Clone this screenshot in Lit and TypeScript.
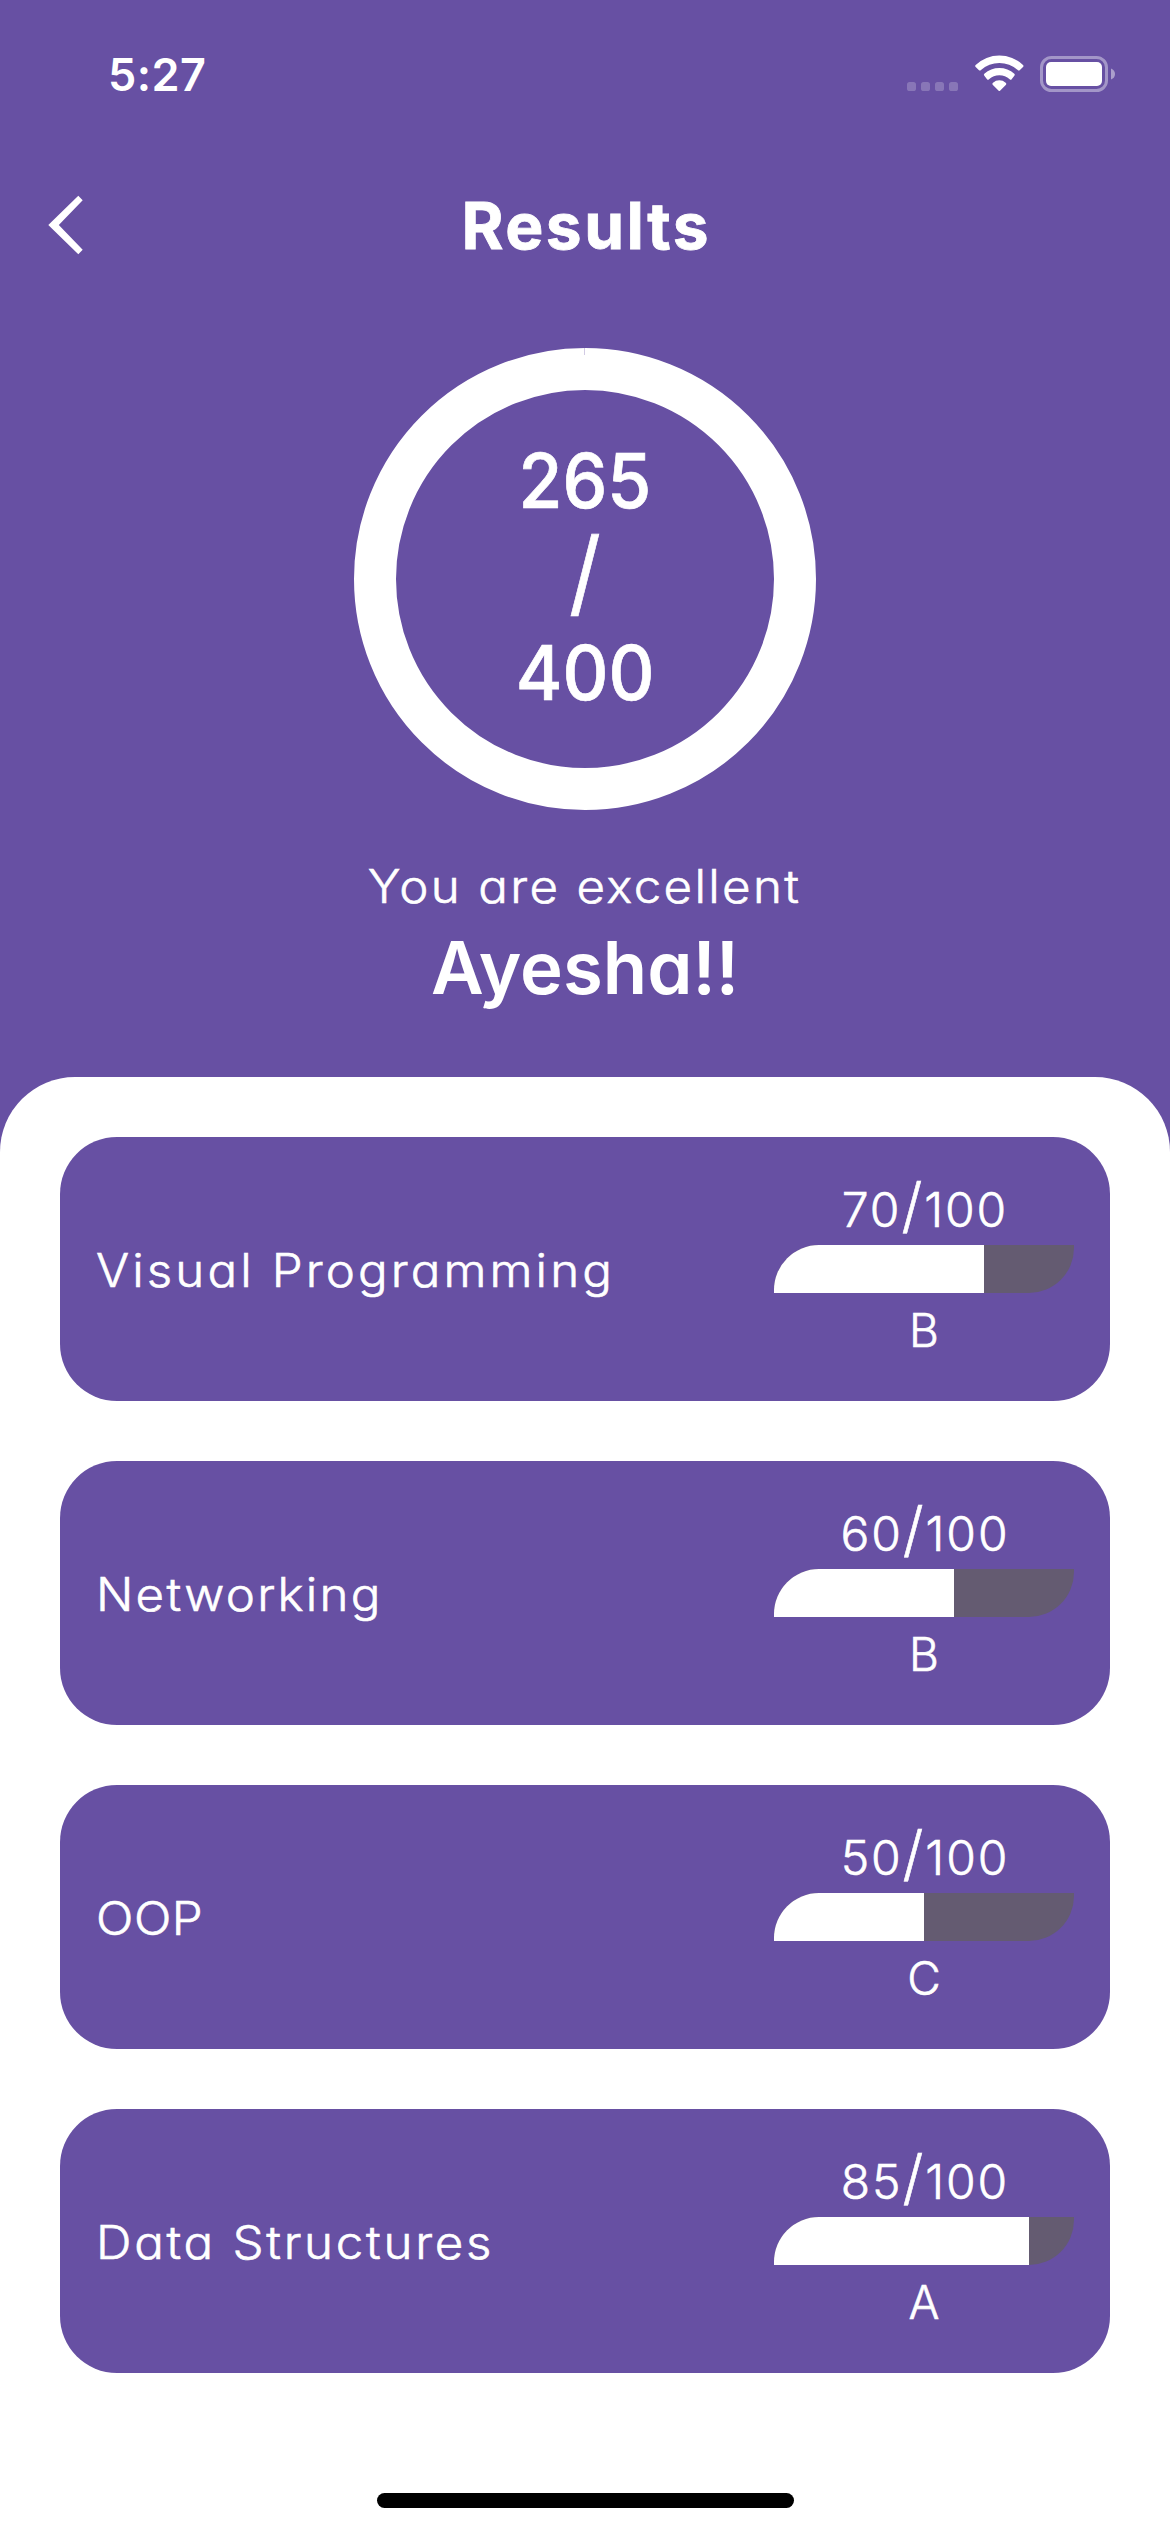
import { LitElement, html, css, svg } from "lit";
import { customElement, property } from "lit/decorators.js";

interface Subject {
  name: string;
  score: number;
  total: number;
  grade: string;
  tracking: number;
}

const SUBJECTS: Subject[] = [
  { name: "Visual Programming", score: 70, total: 100, grade: "B", tracking: 2.9 },
  { name: "Networking", score: 60, total: 100, grade: "B", tracking: 2.1 },
  { name: "OOP", score: 50, total: 100, grade: "C", tracking: 0.5 },
  { name: "Data Structures", score: 85, total: 100, grade: "A", tracking: 2.55 },
];

@customElement("status-bar")
export class StatusBar extends LitElement {
  static styles = css`
    :host {
      display: flex;
      justify-content: space-between;
      height: 141px;
      padding: 0 55px 0 108px;
      box-sizing: border-box;
      color: #fff;
    }
    .time {
      height: 150px;
      line-height: 150px;
      font-size: 45px;
      font-weight: 600;
      letter-spacing: 0.4px;
    }
    .icons {
      display: flex;
      align-items: flex-end;
      height: 92px;
    }
    svg {
      display: block;
    }
    .dots {
      margin: 0 16.5px 1px 0;
    }
    .wifi {
      margin: 0 16.5px 1px 0;
    }
  `;

  render() {
    return html`
      <div class="time">5:27</div>
      <div class="icons">
        <svg class="dots" width="51" height="9" viewBox="0 0 51 9" fill="#fff" fill-opacity=".22">
          ${[0, 14, 28, 42].map((x) => svg`<rect x=${x} width="9" height="9" rx="2.6"></rect>`)}
        </svg>
        <svg class="wifi" width="49" height="36" viewBox="0 0 147 108" fill="#fff">
          <path d="M2 30 A103 103 0 0 1 144 30 Q147 33 144 36 L134 46 Q131 48 128 45 A82 82 0 0 0 18 45 Q15 48 12 46 L2 36 Q-1 33 2 30Z" />
          <path d="M28 56 A67 67 0 0 1 118 56 Q121 59 118 62 L110 73 Q107 76 104 73 A46 46 0 0 0 42 73 Q39 76 36 73 L28 62 Q25 59 28 56Z" />
          <path d="M54 83 A29 29 0 0 1 92 83 Q95 86 93 89 L75 107 Q73 109 71 107 L53 89 Q51 86 54 83Z" />
        </svg>
        <svg width="75" height="36" viewBox="0 0 75 36">
          <rect x="1.5" y="1.5" width="65" height="33" rx="10" fill="none" stroke="#fff" stroke-opacity=".4" stroke-width="3" />
          <rect x="6" y="6" width="56" height="24" rx="5" fill="#fff" />
          <path d="M71 12.5 Q75 14 75 18 T71 23.5Z" fill="#fff" fill-opacity=".45" />
        </svg>
      </div>
    `;
  }
}

@customElement("score-ring")
export class ScoreRing extends LitElement {
  static styles = css`
    :host {
      display: flex;
      flex-direction: column;
      align-items: center;
      justify-content: center;
      position: relative;
      width: 462px;
      height: 462px;
      padding-bottom: 4px;
      box-sizing: border-box;
      border: 42px solid #fff;
      border-radius: 50%;
      color: #fff;
      font-size: 75px;
      font-weight: 500;
      -webkit-text-stroke: 0.7px #fff;
    }
    .seam {
      position: absolute;
      top: -42px;
      left: 188px;
      width: 1px;
      height: 7px;
      background: #d2cbe4;
    }
    .line {
      height: 96px;
      line-height: 96px;
    }
    .value {
      display: inline-block;
      transform: scaleX(0.95);
    }
    .slash {
      display: inline-block;
      font-size: 94px;
      font-weight: 400;
      line-height: 87px;
      transform: scaleX(0.94);
    }
  `;
  @property({ type: Number }) score = 0;
  @property({ type: Number }) total = 0;

  render() {
    return html`
      <div class="seam"></div>
      <div class="line"><span class="value">${this.score}</span></div>
      <div class="line"><span class="slash">/</span></div>
      <div class="line"><span class="value">${this.total}</span></div>
    `;
  }
}

@customElement("subject-card")
export class SubjectCard extends LitElement {
  static styles = css`
    :host {
      display: flex;
      justify-content: space-between;
      align-items: center;
      height: 264px;
      padding: 0 36px;
      box-sizing: border-box;
      border-radius: 57px;
      background: #6750a3;
      color: #fff;
      font-size: 46px;
      font-weight: 300;
      -webkit-text-stroke: 0.6px #fff;
    }
    .name {
      padding-top: 1px;
      transform: scaleX(1.07);
      transform-origin: left;
      white-space: pre;
    }
    .result {
      display: flex;
      flex-direction: column;
      align-items: center;
      width: 300px;
    }
    .score {
      height: 72px;
      line-height: 73px;
      font-size: 48px;
      letter-spacing: 1.9px;
      margin-right: -1.9px;
    }
    .grade {
      height: 72px;
      line-height: 75px;
    }
    .slash {
      font-size: 60px;
      line-height: 0;
    }
    .bar {
      width: 300px;
      height: 48px;
      border-radius: 45px 0 45px 0;
      background: #645b71;
      overflow: hidden;
    }
    .fill {
      height: 48px;
      background: #fff;
    }
  `;
  @property({ attribute: false }) subject!: Subject;

  render() {
    const s = this.subject;
    return html`
      <div class="name" style="letter-spacing:${s.tracking}px">${s.name}</div>
      <div class="result">
        <div class="score">${s.score}<span class="slash">/</span>${s.total}</div>
        <div class="bar"><div class="fill" style="width:${(s.score / s.total) * 100}%"></div></div>
        <div class="grade">${s.grade}</div>
      </div>
    `;
  }
}

@customElement("app-root")
export class AppRoot extends LitElement {
  static styles = css`
    :host {
      display: flex;
      flex-direction: column;
      width: 1170px;
      height: 2532px;
      overflow: hidden;
      background: #6750a3;
      color: #fff;
      font-family: Inter, "Liberation Sans", sans-serif;
      font-feature-settings: "cv11" 1;
    }
    .nav {
      display: grid;
      grid-template-columns: 1fr auto 1fr;
      align-items: center;
      height: 168px;
      padding: 0 48px;
    }
    .back {
      display: block;
    }
    .title {
      padding-top: 1px;
      font-size: 64px;
      font-weight: 700;
      letter-spacing: 2.5px;
      margin-right: -2.5px;
      -webkit-text-stroke: 0.8px #fff;
    }
    .summary {
      display: flex;
      flex-direction: column;
      align-items: center;
      height: 768px;
      padding-top: 39px;
      box-sizing: border-box;
    }
    .caption {
      margin-top: 40px;
      height: 72px;
      line-height: 73px;
      font-size: 46px;
      font-weight: 300;
      letter-spacing: 2.2px;
      transform: scaleX(1.07);
      white-space: pre;
      -webkit-text-stroke: 0.6px #fff;
    }
    .who {
      height: 92px;
      line-height: 92px;
      font-size: 72.5px;
      font-weight: 600;
    }
    .panel {
      display: flex;
      flex-direction: column;
      gap: 60px;
      flex: 1;
      padding: 60px 60px 0;
      border-radius: 75px 75px 0 0;
      background: #fff;
    }
    .home {
      align-self: center;
      margin-top: 60px;
      width: 417px;
      height: 15px;
      border-radius: 8px;
      background: #000;
    }
  `;

  render() {
    return html`
      <status-bar></status-bar>
      <div class="nav">
        <svg class="back" width="35" height="60" viewBox="0 0 35 60" fill="#fff">
          <path d="M30.3 .7 L.3 30 L30.3 59.3 L34.7 54.8 L10.8 30 L34.7 5.2 Z" />
        </svg>
        <div class="title">Results</div>
      </div>
      <div class="summary">
        <score-ring score="265" total="400"></score-ring>
        <div class="caption">You are excellent</div>
        <div class="who">Ayesha!!</div>
      </div>
      <div class="panel">
        ${SUBJECTS.map((s) => html`<subject-card .subject=${s}></subject-card>`)}
        <div class="home"></div>
      </div>
    `;
  }
}
